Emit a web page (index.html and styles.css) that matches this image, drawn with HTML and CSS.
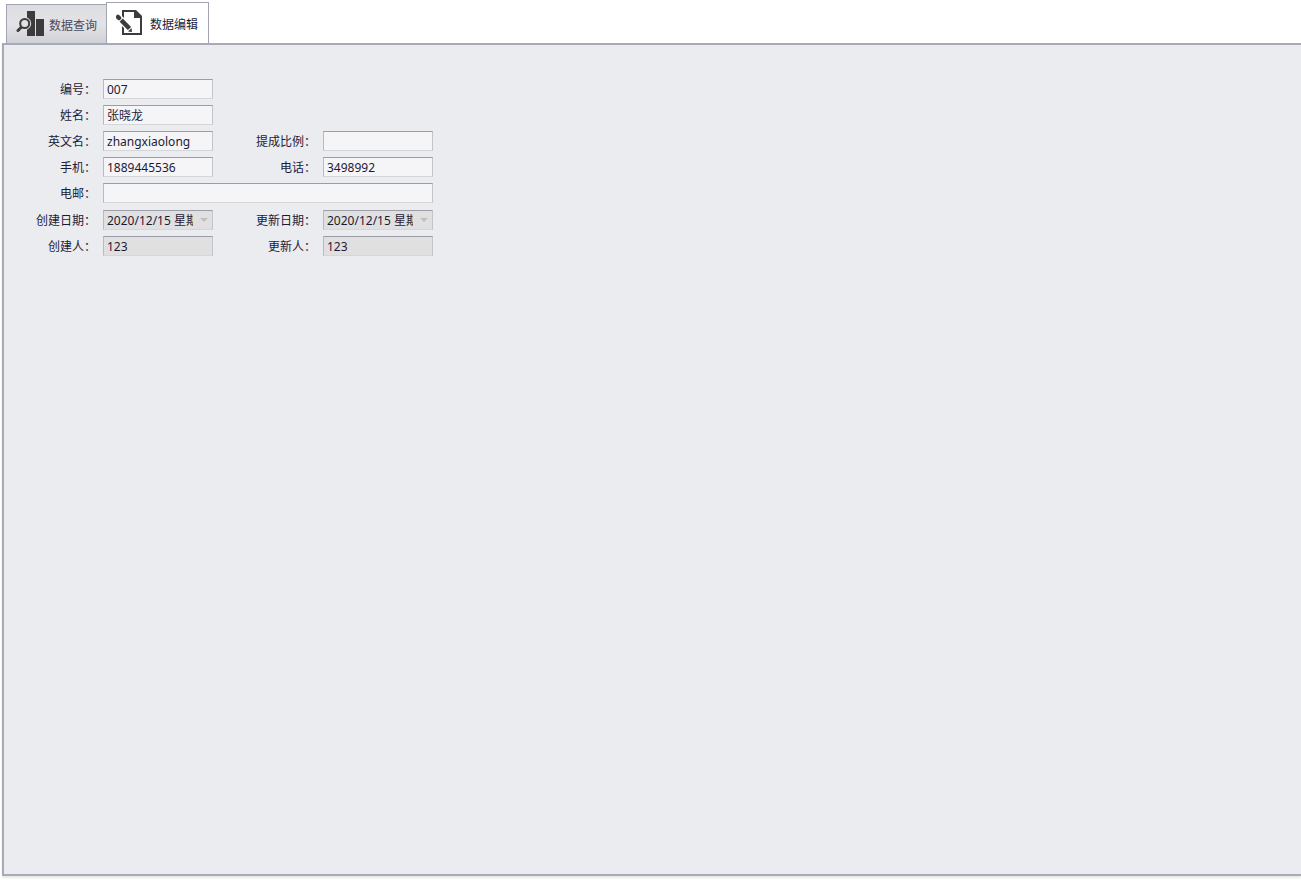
FILE: index.html
```
<!DOCTYPE html>
<html lang="zh-CN">
<head>
  <meta charset="UTF-8">
  <meta name="viewport" content="width=device-width, initial-scale=1.0">
  <title>数据编辑</title>
  <link rel="stylesheet" href="styles.css">
</head>
<body>
  <div class="tabs" role="tablist">
    <button type="button" class="tab" role="tab" aria-selected="false">
      <svg class="tab-icon" width="28" height="28" viewBox="0 0 28 28" aria-hidden="true">
        <path d="M11 1h8v25h-8zM20 9h8v17h-8z" fill="#3c3c3c"/>
        <circle cx="8.700" cy="13.500" r="6.500" fill="#e0e0e4"/>
        <path d="M5.500 17L2 20.500" stroke="#3c3c3c" stroke-width="3" stroke-linecap="round"/>
        <circle cx="8.700" cy="13.500" r="4.500" fill="#e0e0e4" stroke="#3c3c3c" stroke-width="2"/>
      </svg>
      <span>数据查询</span>
    </button>
    <button type="button" class="tab active" role="tab" aria-selected="true">
      <svg class="tab-icon" width="28" height="28" viewBox="0 0 28 28" aria-hidden="true">
        <path d="M7 2H19L25 8V25H7Z" fill="none" stroke="#3c3c3c" stroke-width="2"/>
        <path d="M18 1H20L26 7V9H18Z" fill="#3c3c3c"/>
        <path d="M1 7L15 21" stroke="#fff" stroke-width="7"/>
        <path d="M2 8L3 9" stroke="#3c3c3c" stroke-width="4.500" stroke-linecap="round"/>
        <path d="M5.200 11.200L13.500 19.500" stroke="#3c3c3c" stroke-width="4.500"/>
        <path d="M15.500 19L16 23L12 22.500Z" fill="#3c3c3c"/>
      </svg>
      <span>数据编辑</span>
    </button>
  </div>

  <main class="panel">
    <form>
      <div class="fields">
        <label for="code">编号：</label>
        <input type="text" id="code" value="007">

        <label class="line-start" for="name">姓名：</label>
        <input type="text" id="name" value="张晓龙">

        <label class="line-start" for="enName">英文名：</label>
        <input type="text" id="enName" value="zhangxiaolong">
        <label for="rate">提成比例：</label>
        <input type="text" id="rate">

        <label for="mobile">手机：</label>
        <input type="text" id="mobile" value="1889445536">
        <label for="phone">电话：</label>
        <input type="text" id="phone" value="3498992">

        <label for="email">电邮：</label>
        <input class="wide" type="text" id="email">
      </div>

      <div class="fields audit">
        <label for="createDate">创建日期：</label>
        <div class="date">
          <select id="createDate" disabled><option>2020/12/15 星期二</option></select>
        </div>
        <label for="updateDate">更新日期：</label>
        <div class="date">
          <select id="updateDate" disabled><option>2020/12/15 星期二</option></select>
        </div>

        <label for="creator">创建人：</label>
        <input type="text" id="creator" value="123" disabled>
        <label for="updater">更新人：</label>
        <input type="text" id="updater" value="123" disabled>
      </div>
    </form>
  </main>
</body>
</html>
```
FILE: styles.css
```
* {
  box-sizing: border-box;
}

body {
  display: flex;
  flex-direction: column;
  min-height: 100vh;
  margin: 0;
  padding: 2px 0 6px 2px;
  background: #fff;
  color: #1e1a36;
  font-family: "Noto Sans", "Noto Sans CJK SC", sans-serif;
  font-size: 12px;
}

.tabs {
  display: flex;
  align-items: flex-end;
  padding-left: 4px;
}

.tab {
  display: flex;
  align-items: center;
  gap: 5px;
  height: 39px;
  padding: 0 9px;
  border: 1px solid #a3a3b1;
  border-width: 1px 0 0 1px;
  background: linear-gradient(#dcdde2, #e3e3e7 50%, #d0d0d7);
  color: #4a4860;
  font: inherit;
}

.tab span {
  padding-top: 2px;
}

.tab.active {
  gap: 6px;
  height: 41px;
  padding-right: 10px;
  border-right-width: 1px;
  background: #fff;
  color: #1e1a36;
}

.tab-icon {
  flex: none;
}

.panel {
  flex: 1;
  padding: 34px 32px;
  border: 2px solid #a9aab7;
  border-right: none;
  background: #ebecf0;
  box-shadow: 0 2px 2px #e8e8e5;
}

.fields {
  display: grid;
  grid-template-columns: 60px 110px 96px 110px;
  column-gap: 7px;
  row-gap: 4px;
}

.audit {
  margin-top: 5px;
}

.line-start {
  grid-column-start: 1;
}

.wide {
  grid-column: 2 / 5;
}

label {
  line-height: 22px;
  text-align: right;
  white-space: nowrap;
}

input,
select {
  width: 100%;
  height: 20px;
  margin: 0;
  padding: 0 3px;
  border: 1px solid;
  border-color: #9c9ca9 #c2c3cb #d5d6da #b8b9c3;
  border-radius: 0;
  background: #f5f5f7;
  color: #1e1a36;
  font: inherit;
}

input:focus {
  outline: none;
  border-color: #6f7088;
}

input:disabled,
select:disabled {
  background: #e0e0e0;
  opacity: 1;
}

select {
  display: block;
  appearance: none;
  padding-right: 19px;
}

.date {
  position: relative;
}

.date::after {
  content: "";
  position: absolute;
  top: 8px;
  right: 5px;
  border: 4px solid transparent;
  border-top-color: #c0c0c2;
  border-bottom: none;
}
```
